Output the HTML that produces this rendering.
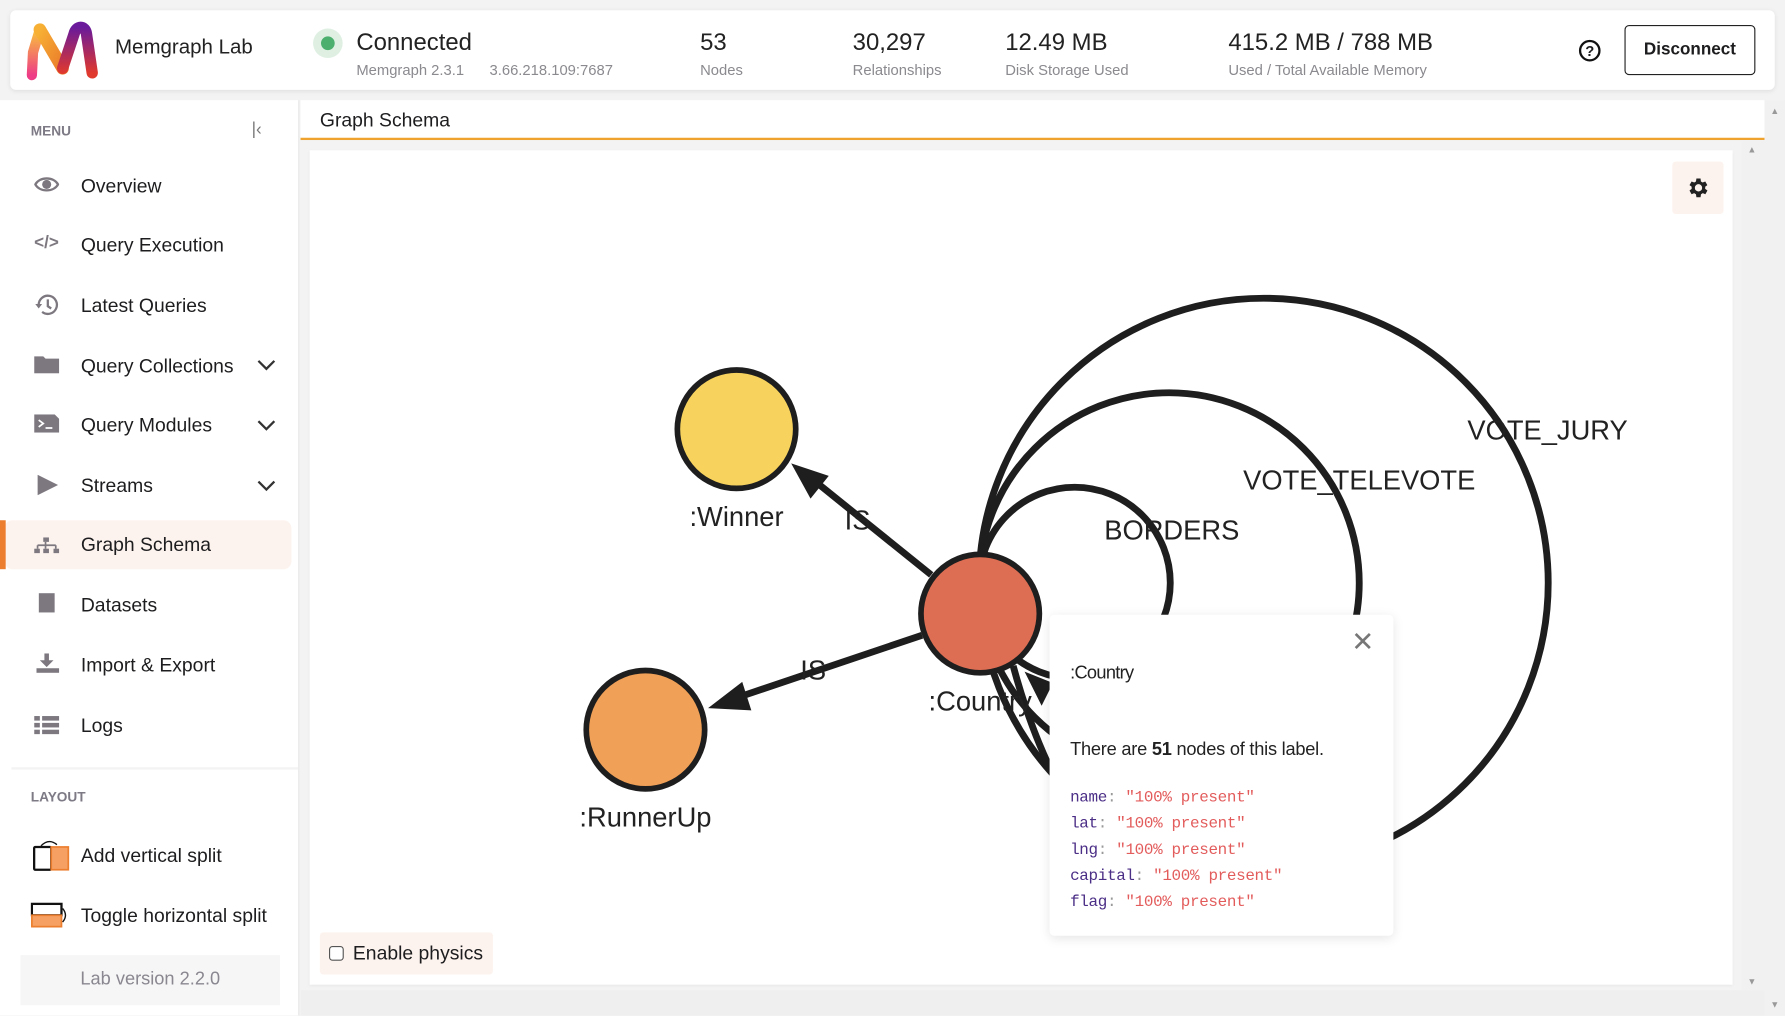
<!DOCTYPE html>
<html><head><meta charset="utf-8"><style>
*{box-sizing:border-box;margin:0;padding:0}
html,body{width:1785px;height:1016px;overflow:hidden;background:#f3f3f3;font-family:"Liberation Sans",sans-serif;color:#1d1d1f}
#w{position:absolute;left:0;top:0;width:1568px;height:892px;transform:scale(1.13839);transform-origin:0 0;background:#f3f3f3}
.a{position:absolute}
.hdr{left:9px;top:9px;width:1550px;height:70px;background:#fff;border-radius:5px;box-shadow:0 1px 4px rgba(0,0,0,.08)}
.big{font-size:21px;color:#222}
.sm{font-size:13px;color:#8a8a8f}
.side{left:0;top:88px;width:263px;height:804px;background:#fff;border-right:1px solid #e6e6e6}
.mi{position:absolute;left:71px;font-size:17px;color:#1d1d1f}
.ic{position:absolute;left:30px;fill:#7d7880;color:#7d7880}
.chev{position:absolute;left:226px}
</style></head><body><div id="w">
<div class="a hdr">
  <svg class="a" style="left:12px;top:7px" width="68" height="56" viewBox="0 0 68 56">
    <defs><linearGradient id="g1" x1="0" y1="0" x2="0" y2="1"><stop offset="0" stop-color="#f9c43a"/><stop offset="1" stop-color="#ee3c86"/></linearGradient>
    <linearGradient id="g2" x1="0" y1="0" x2="1" y2="1"><stop offset="0" stop-color="#f7b034"/><stop offset="1" stop-color="#ea7a2a"/></linearGradient>
    <linearGradient id="g3" x1="0" y1="0" x2="0" y2="1"><stop offset="0" stop-color="#6a1a9a"/><stop offset="1" stop-color="#e0392e"/></linearGradient></defs>
    <path d="M7 50 L8 30 L14 10" stroke="url(#g1)" stroke-width="9" fill="none" stroke-linecap="round"/>
    <path d="M14 10 L34 44" stroke="url(#g2)" stroke-width="11" fill="none" stroke-linecap="round"/>
    <path d="M34 44 L44 14 C46 6 54 6 55 14 L60 48" stroke="url(#g3)" stroke-width="10" fill="none" stroke-linecap="round"/>
  </svg>
  <div class="a" style="left:92px;top:22px;font-size:18px;color:#222">Memgraph Lab</div>
  <div class="a" style="left:266px;top:16px;width:26px;height:26px;border-radius:50%;background:#dff0e3"></div>
  <div class="a" style="left:273px;top:23px;width:12px;height:12px;border-radius:50%;background:#4caf6e"></div>
  <div class="a big" style="left:304px;top:17px">Connected</div>
  <div class="a sm" style="left:304px;top:45px">Memgraph 2.3.1</div>
  <div class="a sm" style="left:421px;top:45px">3.66.218.109:7687</div>
  <div class="a big" style="left:606px;top:17px">53</div><div class="a sm" style="left:606px;top:45px">Nodes</div>
  <div class="a big" style="left:740px;top:17px">30,297</div><div class="a sm" style="left:740px;top:45px">Relationships</div>
  <div class="a big" style="left:874px;top:17px">12.49 MB</div><div class="a sm" style="left:874px;top:45px">Disk Storage Used</div>
  <div class="a big" style="left:1070px;top:17px">415.2 MB / 788 MB</div><div class="a sm" style="left:1070px;top:45px">Used / Total Available Memory</div>
  <div class="a" style="left:1378px;top:26px;width:19px;height:19px;border:2px solid #111;border-radius:50%;font-size:13px;font-weight:bold;text-align:center;line-height:15px">?</div>
  <div class="a" style="left:1418px;top:13px;width:115px;height:44px;border:1px solid #222;border-radius:4px;font-size:15px;font-weight:bold;text-align:center;line-height:42px">Disconnect</div>
</div>

<div class="a side">
  <div class="a" style="left:27px;top:20px;font-size:12px;font-weight:bold;color:#7d7a85">MENU</div>
  <div class="a" style="left:221px;top:17px;font-size:15px;color:#777">|&lsaquo;</div>
  <div class="a" style="left:4px;top:369px;width:252px;height:43px;background:#fdf3ee;border-radius:7px"></div>
  <div class="a" style="left:0;top:369px;width:5px;height:43px;background:#ec7f2f"></div>
  <svg class="ic" style="top:67px" width="22" height="14" viewBox="0 0 22 14"><path d="M1 7C5 0 17 0 21 7C17 14 5 14 1 7Z" fill="none" stroke="#7d7880" stroke-width="2"/><circle cx="11" cy="7" r="4"/></svg>
  <div class="mi" style="top:66px">Overview</div>
  <div class="ic" style="top:117px;font-size:15px;font-weight:bold">&lt;/&gt;</div>
  <div class="mi" style="top:118px">Query Execution</div>
  <svg class="ic" style="top:170px" width="22" height="20" viewBox="0 0 22 20"><path d="M4 10A8 8 0 1 1 7 16" fill="none" stroke="#7d7880" stroke-width="2"/><path d="M1 9L4 13L7 9Z"/><path d="M12 5V11L15 13" fill="none" stroke="#7d7880" stroke-width="2"/></svg>
  <div class="mi" style="top:171px">Latest Queries</div>
  <svg class="ic" style="top:224px" width="22" height="16"><path d="M0 1H8L10 3H22V16H0Z"/></svg>
  <div class="mi" style="top:224px">Query Collections</div>
  <svg class="ic" style="top:276px" width="22" height="16"><path d="M0 0H18L22 4V16H0Z"/><path d="M4 5L8 8L4 11M10 12H16" stroke="#fff" stroke-width="1.5" fill="none"/></svg>
  <div class="mi" style="top:276px">Query Modules</div>
  <svg class="ic" style="top:329px;left:33px" width="18" height="18"><path d="M0 0L18 9L0 18Z"/></svg>
  <div class="mi" style="top:329px">Streams</div>
  <svg class="ic" style="top:384px" width="22" height="14"><rect x="8" y="0" width="5" height="4"/><path d="M10 4V7M3 7H19M3 7V10M10 7V10M19 7V10" stroke="#7d7880" stroke-width="1.5"/><rect x="0" y="10" width="5" height="4"/><rect x="8" y="10" width="5" height="4"/><rect x="17" y="10" width="5" height="4"/></svg>
  <div class="mi" style="top:381px">Graph Schema</div>
  <svg class="ic" style="top:433px;left:34px" width="15" height="18"><rect width="14" height="17"/></svg>
  <div class="mi" style="top:434px">Datasets</div>
  <svg class="ic" style="top:486px;left:32px" width="20" height="18"><path d="M7 0H11V6H15L9 12L3 6H7Z"/><rect x="0" y="13" width="20" height="4"/></svg>
  <div class="mi" style="top:487px">Import &amp; Export</div>
  <svg class="ic" style="top:541px" width="22" height="16"><rect width="5" height="4"/><rect x="7" width="15" height="4"/><rect y="6" width="5" height="4"/><rect x="7" y="6" width="15" height="4"/><rect y="12" width="5" height="4"/><rect x="7" y="12" width="15" height="4"/></svg>
  <div class="mi" style="top:540px">Logs</div>
  <svg class="chev" style="top:228px" width="16" height="10"><path d="M1 1L8 8L15 1" stroke="#333" stroke-width="2" fill="none"/></svg>
  <svg class="chev" style="top:281px" width="16" height="10"><path d="M1 1L8 8L15 1" stroke="#333" stroke-width="2" fill="none"/></svg>
  <svg class="chev" style="top:334px" width="16" height="10"><path d="M1 1L8 8L15 1" stroke="#333" stroke-width="2" fill="none"/></svg>
  <div class="a" style="left:10px;top:586px;width:252px;height:2px;background:#f3f3f3"></div>
  <div class="a" style="left:27px;top:605px;font-size:12px;font-weight:bold;color:#7d7a85">LAYOUT</div>
  <svg class="a" style="left:28px;top:650px" width="34" height="28"><rect x="2" y="6" width="15" height="20" fill="none" stroke="#111" stroke-width="2" rx="1"/><rect x="17" y="6" width="15" height="20" fill="#f6a063" stroke="#ec7f2f" stroke-width="1.5"/><path d="M8 5Q15 -2 22 4" stroke="#111" fill="none" stroke-width="1.2"/></svg>
  <div class="mi" style="top:654px">Add vertical split</div>
  <svg class="a" style="left:27px;top:704px" width="34" height="24"><rect x="1" y="2" width="26" height="10" fill="none" stroke="#111" stroke-width="2"/><rect x="1" y="12" width="26" height="10" fill="#f6a063" stroke="#ec7f2f" stroke-width="1.5"/><path d="M28 6Q33 12 28 18" stroke="#111" fill="none" stroke-width="1.2"/></svg>
  <div class="mi" style="top:707px">Toggle horizontal split</div>
  <div class="a" style="left:18px;top:751px;width:228px;height:44px;background:#f6f6f6;font-size:16px;color:#8a8790;text-align:center;line-height:44px">Lab version 2.2.0</div>
</div>

<div class="a" style="left:264px;top:88px;width:1286px;height:35px;background:#fff;border-bottom:2px solid #f0a22e"></div>
<div class="a" style="left:281px;top:96px;font-size:17px">Graph Schema</div>
<div class="a" style="left:1550px;top:88px;width:18px;height:804px;background:#f1f1f1"></div>
<div class="a" style="left:1530px;top:123px;width:20px;height:755px;background:#f1f1f1"></div>
<div class="a" style="left:264px;top:870px;width:1286px;height:22px;background:#efefef"></div>
<div class="a" style="left:1555px;top:93px;font-size:8px;color:#999">▲</div>
<div class="a" style="left:1535px;top:127px;font-size:8px;color:#999">▲</div>
<div class="a" style="left:1535px;top:858px;font-size:8px;color:#999">▼</div>
<div class="a" style="left:1555px;top:878px;font-size:8px;color:#999">▼</div>

<div class="a" style="left:272px;top:132px;width:1250px;height:733px;background:#fff;box-shadow:0 1px 3px rgba(0,0,0,.06);overflow:hidden">
  <svg class="a" style="left:0;top:0" width="1250" height="733" viewBox="272 132 1250 733">
    <g fill="none" stroke="#1e1e1e" stroke-width="6">
      <circle cx="1110" cy="512" r="250"/>
      <circle cx="1027" cy="512" r="167"/>
      <circle cx="944" cy="512" r="84"/>
      <line x1="818" y1="505" x2="715" y2="422"/>
      <line x1="810" y1="558" x2="650" y2="612"/>
      <path d="M890 585 Q905 640 925 680"/>
    </g>
    <path d="M695 407 L728 418 L712 438Z" fill="#1e1e1e"/>
    <path d="M622 622 L652 599 L660 624Z" fill="#1e1e1e"/>
    <path d="M900 590 L925 600 L915 620Z" fill="#1e1e1e"/>
    <circle cx="647" cy="377" r="52" fill="#f7d35e" stroke="#1e1e1e" stroke-width="5"/>
    <circle cx="567" cy="641" r="52" fill="#f0a057" stroke="#1e1e1e" stroke-width="5"/>
    <circle cx="861" cy="539" r="52" fill="#dd6e53" stroke="#1e1e1e" stroke-width="5"/>
    <g font-family="Liberation Sans,sans-serif" font-size="24" fill="#222">
      <text x="647" y="462" text-anchor="middle">:Winner</text>
      <text x="567" y="726" text-anchor="middle">:RunnerUp</text>
      <text x="861" y="624" text-anchor="middle">:Country</text>
      <text x="742" y="465">IS</text>
      <text x="703" y="597">IS</text>
      <text x="970" y="474">BORDERS</text>
      <text x="1092" y="430">VOTE_TELEVOTE</text>
      <text x="1289" y="386">VOTE_JURY</text>
    </g>
  </svg>
  <div class="a" style="left:1197px;top:10px;width:45px;height:46px;background:#fdf3ee;border-radius:3px"></div>
  <svg class="a" style="left:1209px;top:22px" width="22" height="22" viewBox="0 0 24 24"><path fill="#222" d="M19.4 13a7.5 7.5 0 0 0 0-2l2.1-1.6-2-3.5-2.5 1a7 7 0 0 0-1.7-1L15 3h-4l-.4 2.9a7 7 0 0 0-1.7 1l-2.5-1-2 3.5L6.5 11a7.5 7.5 0 0 0 0 2l-2.1 1.6 2 3.5 2.5-1a7 7 0 0 0 1.7 1L11 21h4l.4-2.9a7 7 0 0 0 1.7-1l2.5 1 2-3.5zM13 15.5a3.5 3.5 0 1 1 0-7 3.5 3.5 0 0 1 0 7z" transform="translate(-1 0)"/></svg>
  <div class="a" style="left:9px;top:687px;width:152px;height:37px;background:#fdf3ee;border-radius:3px"></div>
  <div class="a" style="left:17px;top:699px;width:13px;height:13px;border:1.5px solid #555;border-radius:3px;background:#fff"></div>
  <div class="a" style="left:38px;top:696px;font-size:17px">Enable physics</div>
</div>

<div class="a" style="left:922px;top:540px;width:302px;height:282px;background:#fff;border-radius:4px;box-shadow:0 2px 10px rgba(0,0,0,.1)">
  <div class="a" style="left:265px;top:10px;font-size:24px;color:#777">✕</div>
  <div class="a" style="left:18px;top:43px;font-size:16px;color:#222;letter-spacing:-.6px">:Country</div>
  <div class="a" style="left:18px;top:110px;font-size:16px;color:#222;letter-spacing:-.2px">There are <b>51</b> nodes of this label.</div>
  <div class="a" style="left:18px;top:150px;font-family:'Liberation Mono',monospace;font-size:14px;line-height:23px;color:#e35c5c;letter-spacing:-.3px">
    <div><span style="color:#4b2e86">name</span><span style="color:#999">:</span> "100% present"</div>
    <div><span style="color:#4b2e86">lat</span><span style="color:#999">:</span> "100% present"</div>
    <div><span style="color:#4b2e86">lng</span><span style="color:#999">:</span> "100% present"</div>
    <div><span style="color:#4b2e86">capital</span><span style="color:#999">:</span> "100% present"</div>
    <div><span style="color:#4b2e86">flag</span><span style="color:#999">:</span> "100% present"</div>
  </div>
</div>
</div></body></html>
